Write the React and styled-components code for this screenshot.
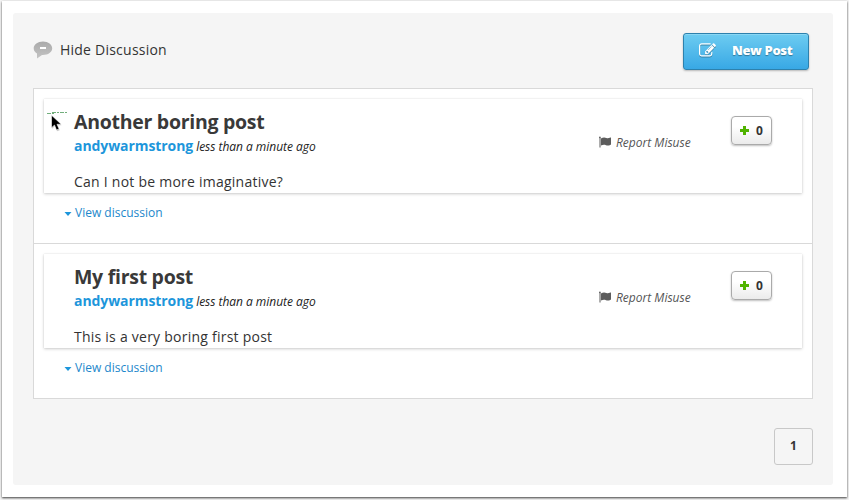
import React from "react";
import styled, { createGlobalStyle } from "styled-components";

const GlobalStyle = createGlobalStyle`
  * { box-sizing: border-box; }
  html, body { margin: 0; padding: 0; background: #fff; }
  body { font-family: "Open Sans", sans-serif; color: #333; overflow: hidden; }
  button { font-family: inherit; margin: 0; cursor: pointer; }
  svg { display: block; flex: none; }
`;

const Page = styled.div`
  width: 849px;
  height: 500px;
  padding: 1px 2px 3px;
  background: #f4f4f4;
`;

const Frame = styled.div`
  height: 496px;
  padding: 12px 14px 12px 11px;
  background: #fff;
  box-shadow: 0 1px 2px rgba(0, 0, 0, 0.75);
`;

const Panel = styled.main`
  height: 472px;
  padding: 20px;
  background: #f5f5f5;
  border-radius: 3px;
`;

const Toolbar = styled.header`
  display: flex;
  align-items: flex-start;
  justify-content: space-between;
  height: 55px;
  padding-right: 4px;
`;

const Toggle = styled.a`
  display: flex;
  align-items: center;
  gap: 7px;
  height: 33px;
  font-size: 14px;
  line-height: 33px;
  letter-spacing: 0.23px;
  color: #333;
`;

const NewPostButton = styled.button`
  display: flex;
  align-items: center;
  width: 126px;
  height: 37px;
  padding: 0 0 3px 15px;
  gap: 16px;
  border: 1px solid #2d81ad;
  border-radius: 3px;
  background: linear-gradient(#6dccf1, #38a8e5);
  box-shadow: inset 0 1px 0 #8ad7f4, 0 1px 2px rgba(0, 0, 0, 0.25);
  color: #fff;
  font-size: 13px;
  font-weight: 800;
  letter-spacing: -0.38px;
  text-shadow: 0 1px 1px rgba(0, 0, 0, 0.35);
  white-space: nowrap;

  svg { filter: drop-shadow(0 1px 0 rgba(0, 0, 0, 0.3)); }
`;

const ThreadList = styled.section`
  border: 1px solid #d9d9d9;
  background: #fff;
`;

const Thread = styled.article`
  height: ${(p) => (p.$last ? "154px" : "155px")};
  padding: 10px 10px 0;
  border-bottom: ${(p) => (p.$last ? "0" : "1px solid #d9d9d9")};
`;

const Card = styled.div`
  position: relative;
  display: flex;
  height: 94px;
  padding: 0 30px;
  box-shadow: 0 0 1px rgba(0, 0, 0, 0.12), 0 1px 3px rgba(0, 0, 0, 0.2);
`;

const Post = styled.div`
  flex: 1;
  white-space: nowrap;
`;

const Title = styled.h2`
  margin: 8px 0 0;
  font-size: 19.5px;
  line-height: 29px;
  font-weight: 700;
  letter-spacing: -0.28px;
  color: #393939;
`;

const Meta = styled.div`
  height: 20px;
  line-height: 20px;
  font-size: 12px;
  font-style: italic;
  letter-spacing: -0.03px;
  color: #222;
`;

const Author = styled.a`
  font-size: 14px;
  font-weight: 700;
  font-style: normal;
  letter-spacing: -0.08px;
  color: #1d96db;
`;

const Body = styled.p`
  margin: 16px 0 0;
  font-size: 14px;
  line-height: 20px;
  letter-spacing: 0.24px;
  color: #333;
`;

const Report = styled.a`
  display: flex;
  align-items: center;
  gap: 5px;
  width: 132px;
  height: 18px;
  margin-top: 34px;
  font-size: 12px;
  font-style: italic;
  color: #555;
  white-space: nowrap;
`;

const VoteButton = styled.button`
  display: flex;
  align-items: center;
  gap: 7px;
  width: 41px;
  height: 29px;
  margin-top: 17px;
  padding: 0 0 0 8px;
  border: 1px solid #aaa;
  border-radius: 4px;
  background: linear-gradient(#fff 35%, #ebebeb);
  box-shadow: 0 1px 2px rgba(0, 0, 0, 0.25);
  color: #333;
  font-size: 12px;
  font-weight: 700;
`;

const ViewLink = styled.a`
  display: flex;
  align-items: center;
  gap: 3px;
  height: 20px;
  margin: 9px 0 0 20px;
  font-size: 12px;
  color: #1d87cb;

  svg { margin-top: 3px; }
`;

const Pagination = styled.nav`
  display: flex;
  justify-content: flex-end;
  margin-top: 29px;
`;

const PageNumber = styled.a`
  width: 39px;
  height: 37px;
  border: 1px solid #c8c8c8;
  border-radius: 3px;
  font-size: 12px;
  font-weight: 700;
  line-height: 34px;
  text-align: center;
  color: #333;
`;

const Pointer = styled.div`
  position: absolute;
  left: 3px;
  top: 13px;
`;

const BubbleIcon = () => (
  <svg width="20" height="18" viewBox="0 0 20 18">
    <defs>
      <linearGradient id="bubble" x1="0" y1="0" x2="0" y2="1">
        <stop offset="0" stopColor="#aaa" />
        <stop offset="1" stopColor="#c4c4c4" />
      </linearGradient>
    </defs>
    <path d="M10 .5C4.800.5.7 3.500.7 7.300c0 2.300 1.200 4.100 3.300 5.300V17.500l5-3.500c5.800.300 10.200-2.600 10.200-6.700C19.200 3.500 15.200.5 10 .5Z" fill="url(#bubble)" />
    <rect x="7" y="6" width="6" height="2" fill="#fff" />
  </svg>
);

const EditIcon = () => (
  <svg width="17" height="17" viewBox="0 0 1792 1792" fill="#fff">
    <path d="M888 1184l116-116-152-152-116 116v56h96v96h56zm440-720q-16-16-33 1l-350 350q-17 17-1 33t33-1l350-350q17-17 1-33zm80 594v190q0 119-84.500 203.500t-203.500 84.500h-832q-119 0-203.500-84.500t-84.500-203.500v-832q0-119 84.500-203.500t203.500-84.500h832q63 0 117 25 15 7 18 23 3 17-9 29l-49 49q-14 14-32 8-23-6-45-6h-832q-66 0-113 47t-47 113v832q0 66 47 113t113 47h832q66 0 113-47t47-113v-126q0-13 9-22l64-64q15-15 35-7t20 29zm-96-738l288 288-672 672h-288v-288zm444 132l-92 92-288-288 92-92q28-28 68-28t68 28l152 152q28 28 28 68t-28 68z" />
  </svg>
);

const FlagIcon = () => (
  <svg width="12" height="12" viewBox="0 0 12 12" fill="#5c5c5c">
    <path d="M0 1.500C0 .9.400.600.900.600s.900.300.900.900c0 .3-.1.500-.3.700V11.500H.5V2.200C.2 2 0 1.800 0 1.500Z" />
    <path d="M1.900 2.500C4 1.400 5.700 1.400 7.400 2.100c1.200.5 2.200.3 4.100-.5.300-.1.500 0 .5.300v6.300c0 .3-.1.400-.3.500-2.100 1-3.300 1.100-4.700.5C5.400 8.500 4.100 8.600 1.900 9.500Z" />
  </svg>
);

const PlusIcon = () => (
  <svg width="9" height="10" viewBox="0 0 9 10" fill="#50b300">
    <path d="M3 0h3v3h3v3H6v3H3v-3H0v-3h3Z" />
  </svg>
);

const CaretIcon = () => (
  <svg width="8" height="4" viewBox="0 0 8 4" fill="#1d96db">
    <path d="M.5 0h7L4 4Z" />
  </svg>
);

const PointerIcon = () => (
  <svg width="22" height="22" viewBox="0 0 22 22">
    <path d="M0 1.500H7M5 .5H20" stroke="#449451" strokeWidth="1" strokeDasharray="4 1 2 1" opacity=".75" />
    <path d="M4.500 3.200V16l3-2.700 2 5.200 2.700-1.100-2.100-5h4Z" fill="#888" opacity=".45" transform="translate(.5 .8)" />
    <path d="M4.500 3.200V15.800l3-2.700 2 4.900 2.600-1.100-2.100-4.600h4.200Z" fill="#000" stroke="#fff" strokeWidth=".6" />
  </svg>
);

const threads = [
  { title: "Another boring post", body: "Can I not be more imaginative?", pointer: true },
  { title: "My first post", body: "This is a very boring first post" },
];

function DiscussionThread({ thread, last }) {
  return (
    <Thread $last={last}>
      <Card>
        {thread.pointer && <Pointer><PointerIcon /></Pointer>}
        <Post>
          <Title>{thread.title}</Title>
          <Meta><Author>andywarmstrong</Author> less than a minute ago</Meta>
          <Body>{thread.body}</Body>
        </Post>
        <Report><FlagIcon />Report Misuse</Report>
        <VoteButton><PlusIcon />0</VoteButton>
      </Card>
      <ViewLink><CaretIcon />View discussion</ViewLink>
    </Thread>
  );
}

export default function App() {
  return (
    <>
      <GlobalStyle />
      <Page>
        <Frame>
          <Panel>
            <Toolbar>
              <Toggle><BubbleIcon />Hide Discussion</Toggle>
              <NewPostButton><EditIcon />New Post</NewPostButton>
            </Toolbar>
            <ThreadList>
              {threads.map((t, i) => (
                <DiscussionThread key={t.title} thread={t} last={i === threads.length - 1} />
              ))}
            </ThreadList>
            <Pagination><PageNumber>1</PageNumber></Pagination>
          </Panel>
        </Frame>
      </Page>
    </>
  );
}
